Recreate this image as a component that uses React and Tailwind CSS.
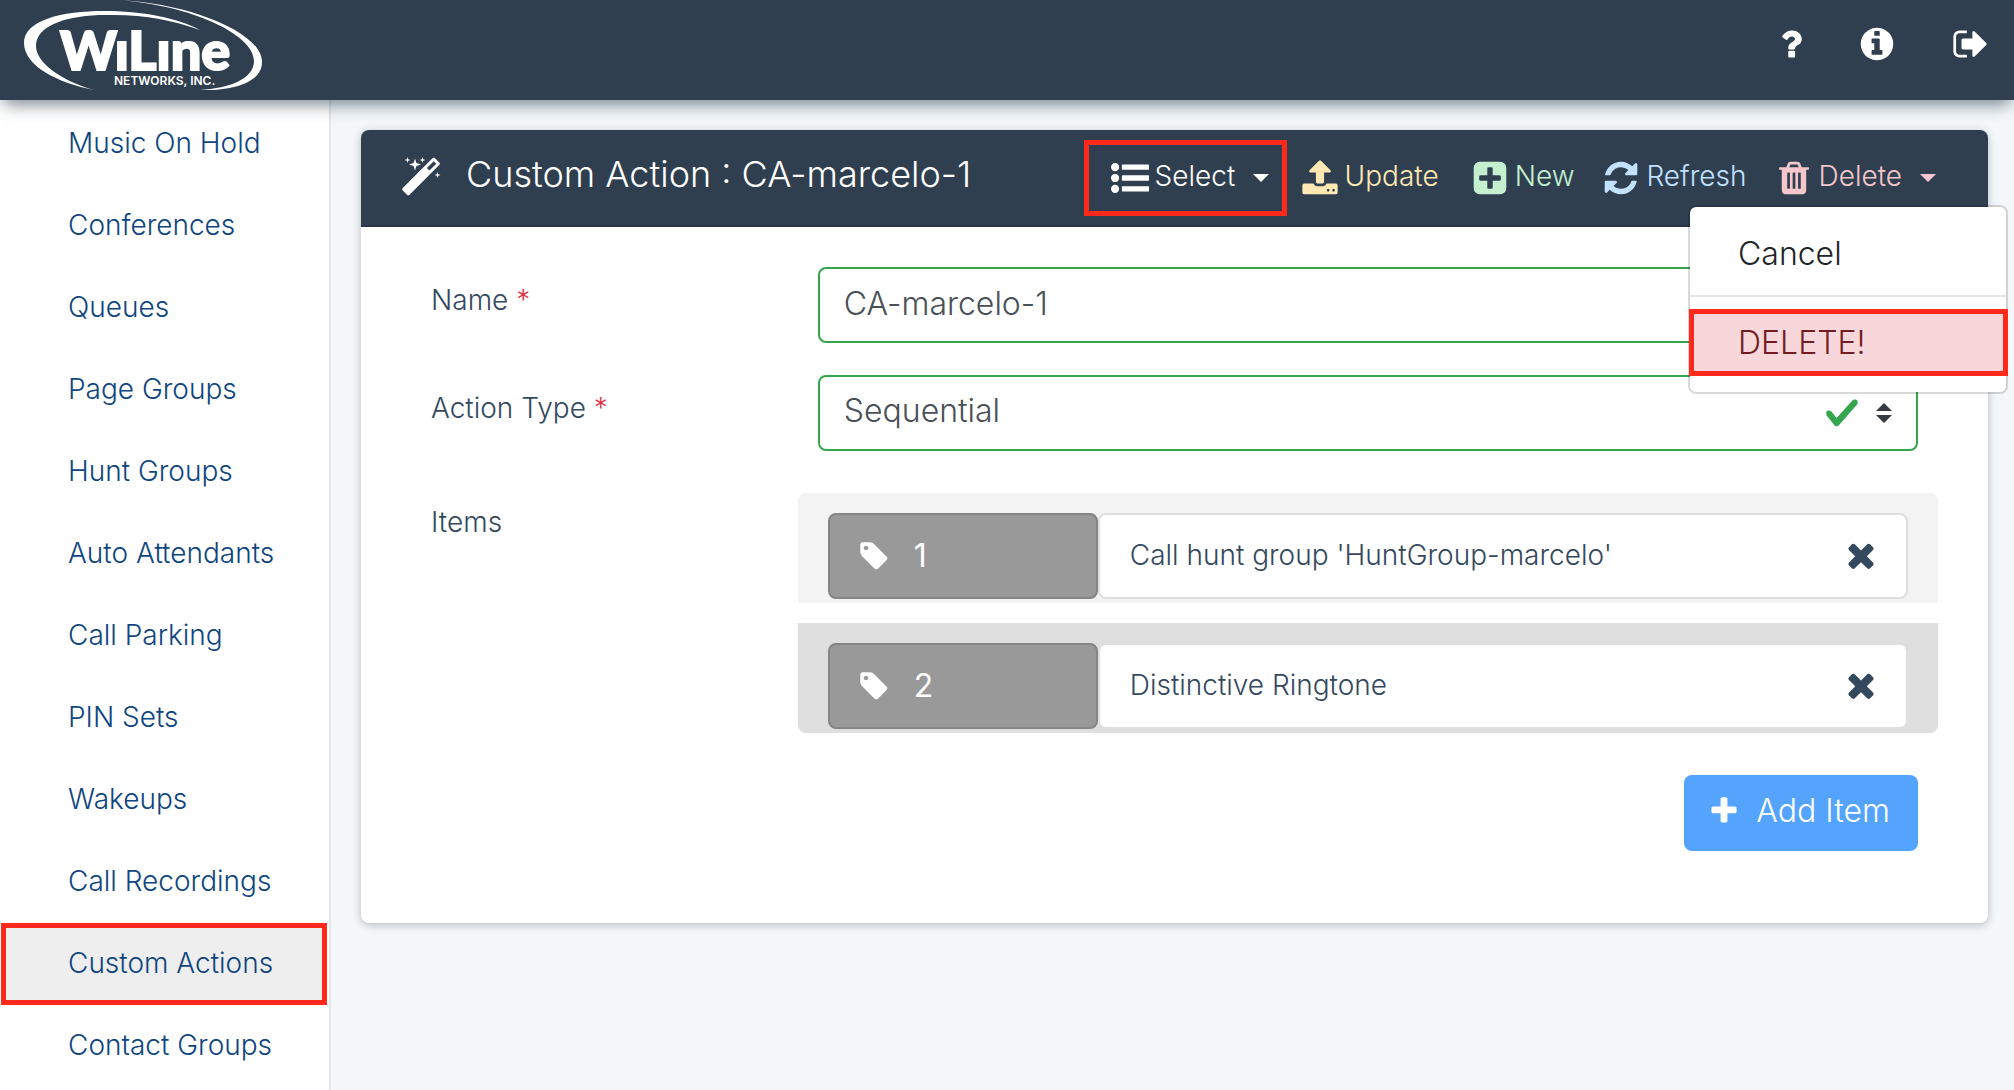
// src/App.jsx
import React, { useState } from 'react';

// Font Awesome 4 glyphs, all on a 1792 grid
const ICONS = {
  question: 'M1088 1256v240q0 16-12 28t-28 12h-240q-16 0-28-12t-12-28v-240q0-16 12-28t28-12h240q16 0 28 12t12 28zm316-600q0 54-15.5 101t-35 76.5-55 59.5-57.5 43.5-61 35.5q-41 23-68.5 65t-27.5 67q0 17-12 32.5t-28 15.5h-240q-15 0-25.5-18.5t-10.5-37.5v-45q0-83 65-156.5t143-108.5q59-27 84-56t25-76q0-42-46.5-74t-107.5-32q-65 0-108 29-35 25-107 115-13 16-31 16-12 0-25-8l-164-125q-13-10-15.5-25t5.5-28q160-266 464-266 80 0 161 31t146 83 106 127.5 41 158.5z',
  info: 'M1152 1376v-160q0-14-9-23t-23-9h-96v-512q0-14-9-23t-23-9h-320q-14 0-23 9t-9 23v160q0 14 9 23t23 9h96v320h-96q-14 0-23 9t-9 23v160q0 14 9 23t23 9h448q14 0 23-9t9-23zm-128-896v-160q0-14-9-23t-23-9h-192q-14 0-23 9t-9 23v160q0 14 9 23t23 9h192q14 0 23-9t9-23zm640 416q0 209-103 385.5t-279.5 279.5-385.5 103-385.5-103-279.5-279.5-103-385.5 103-385.5 279.5-279.5 385.5-103 385.5 103 279.5 279.5 103 385.5z',
  signOut: 'M704 1440q0 4 1 20t.5 26.5-3 23.5-10 19.5-20.5 6.5h-320q-119 0-203.5-84.5t-84.5-203.5v-704q0-119 84.5-203.5t203.5-84.5h320q13 0 22.5 9.5t9.5 22.5q0 4 1 20t.5 26.5-3 23.5-10 19.5-20.5 6.5h-320q-66 0-113 47t-47 113v704q0 66 47 113t113 47h312l11.5 1 11.5 3 8 5.5 7 9 2 13.5zm928-544q0 26-19 45l-544 544q-19 19-45 19t-45-19-19-45v-288h-448q-26 0-45-19t-19-45v-384q0-26 19-45t45-19h448v-288q0-26 19-45t45-19 45 19l544 544q19 19 19 45z',
  magic: 'M1254 581l293-293-107-107-293 293zm447-293q0 27-18 45l-1286 1286q-18 18-45 18t-45-18l-198-198q-18-18-18-45t18-45l1286-1286q18-18 45-18t45 18l198 198q18 18 18 45zm-1351-190l98 30-98 30-30 98-30-98-98-30 98-30 30-98zm350 162l196 60-196 60-60 196-60-196-196-60 196-60 60-196zm930 478l98 30-98 30-30 98-30-98-98-30 98-30 30-98zm-640-640l98 30-98 30-30 98-30-98-98-30 98-30 30-98z',
  list: 'M384 1408q0 80-56 136t-136 56-136-56-56-136 56-136 136-56 136 56 56 136zm0-512q0 80-56 136t-136 56-136-56-56-136 56-136 136-56 136 56 56 136zm1408 416v192q0 13-9.5 22.5t-22.5 9.5h-1216q-13 0-22.5-9.5t-9.5-22.5v-192q0-13 9.5-22.5t22.5-9.5h1216q13 0 22.5 9.5t9.5 22.5zm-1408-928q0 80-56 136t-136 56-136-56-56-136 56-136 136-56 136 56 56 136zm1408 416v192q0 13-9.5 22.5t-22.5 9.5h-1216q-13 0-22.5-9.5t-9.5-22.5v-192q0-13 9.5-22.5t22.5-9.5h1216q13 0 22.5 9.5t9.5 22.5zm0-512v192q0 13-9.5 22.5t-22.5 9.5h-1216q-13 0-22.5-9.5t-9.5-22.5v-192q0-13 9.5-22.5t22.5-9.5h1216q13 0 22.5 9.5t9.5 22.5z',
  upload: 'M1344 1472q0-26-19-45t-45-19-45 19-19 45 19 45 45 19 45-19 19-45zm256 0q0-26-19-45t-45-19-45 19-19 45 19 45 45 19 45-19 19-45zm128-224v320q0 40-28 68t-68 28h-1472q-40 0-68-28t-28-68v-320q0-40 28-68t68-28h427q21 56 70.5 92t110.5 36h256q61 0 110.5-36t70.5-92h427q40 0 68 28t28 68zm-325-648q-17 40-59 40h-256v448q0 26-19 45t-45 19h-256q-26 0-45-19t-19-45v-448h-256q-42 0-59-40-17-39 14-69l448-448q18-19 45-19t45 19l448 448q31 30 14 69z',
  plusSquare: 'M1408 960v-128q0-26-19-45t-45-19h-320v-320q0-26-19-45t-45-19h-128q-26 0-45 19t-19 45v320h-320q-26 0-45 19t-19 45v128q0 26 19 45t45 19h320v320q0 26 19 45t45 19h128q26 0 45-19t19-45v-320h320q26 0 45-19t19-45zm256-544v960q0 119-84.5 203.5t-203.5 84.5h-960q-119 0-203.5-84.5t-84.5-203.5v-960q0-119 84.5-203.5t203.5-84.5h960q119 0 203.5 84.5t84.5 203.5z',
  refresh: 'M1639 1056q0 5-1 7-64 268-268 434.5t-478 166.5q-146 0-282.5-55t-243.5-157l-129 129q-19 19-45 19t-45-19-19-45v-448q0-26 19-45t45-19h448q26 0 45 19t19 45-19 45l-137 137q71 66 161 102t187 36q134 0 250-65t186-179q11-17 53-117 8-23 30-23h192q13 0 22.5 9.5t9.5 22.5zm25-800v448q0 26-19 45t-45 19h-448q-26 0-45-19t-19-45 19-45l138-138q-148-137-349-137-134 0-250 65t-186 179q-11 17-53 117-8 23-30 23h-199q-13 0-22.5-9.5t-9.5-22.5v-7q65-268 270-434.5t480-166.5q146 0 284 55.5t245 156.5l130-129q19-19 45-19t45 19 19 45z',
  trash: 'M704 1376v-704q0-14-9-23t-23-9h-64q-14 0-23 9t-9 23v704q0 14 9 23t23 9h64q14 0 23-9t9-23zm256 0v-704q0-14-9-23t-23-9h-64q-14 0-23 9t-9 23v704q0 14 9 23t23 9h64q14 0 23-9t9-23zm256 0v-704q0-14-9-23t-23-9h-64q-14 0-23 9t-9 23v704q0 14 9 23t23 9h64q14 0 23-9t9-23zm-544-992h448l-48-117q-7-9-17-11h-317q-10 2-17 11zm928 32v64q0 14-9 23t-23 9h-96v948q0 83-47 143.5t-113 60.5h-832q-66 0-113-58.5t-47-141.5v-952h-96q-14 0-23-9t-9-23v-64q0-14 9-23t23-9h309l70-167q15-37 54-63t79-26h320q40 0 79 26t54 63l70 167h309q14 0 23 9t9 23z',
  tag: 'M576 448q0-53-37.5-90.5t-90.5-37.5-90.5 37.5-37.5 90.5 37.5 90.5 90.5 37.5 90.5-37.5 37.5-90.5zm1067 576q0 53-37 90l-491 492q-39 37-91 37-53 0-90-37l-715-716q-38-37-64.5-101t-26.5-117v-416q0-52 38-90t90-38h416q53 0 117 26.5t102 64.5l715 714q37 39 37 91z',
  times: 'M1490 1322q0 40-28 68l-136 136q-28 28-68 28t-68-28l-294-294-294 294q-28 28-68 28t-68-28l-136-136q-28-28-28-68t28-68l294-294-294-294q-28-28-28-68t28-68l136-136q28-28 68-28t68 28l294 294 294-294q28-28 68-28t68 28l136 136q28 28 28 68t-28 68l-294 294 294 294q28 28 28 68z',
  plus: 'M1600 736v192q0 40-28 68t-68 28h-416v416q0 40-28 68t-68 28h-192q-40 0-68-28t-28-68v-416h-416q-40 0-68-28t-28-68v-192q0-40 28-68t68-28h416v-416q0-40 28-68t68-28h192q40 0 68 28t28 68v416h416q40 0 68 28t28 68z',
};

const Icon = ({ name, className = 'size-[38px]' }) => (
  <svg viewBox="0 0 1792 1792" fill="currentColor" aria-hidden="true" className={`shrink-0 ${className}`}>
    <path d={ICONS[name]} />
  </svg>
);

const Caret = () => (
  <svg viewBox="0 0 16 8" fill="currentColor" aria-hidden="true" className="ml-[18px] w-4 h-2 shrink-0">
    <path d="M0 0h16L8 8z" />
  </svg>
);

const NAV_ITEMS = [
  'Music On Hold',
  'Conferences',
  'Queues',
  'Page Groups',
  'Hunt Groups',
  'Auto Attendants',
  'Call Parking',
  'PIN Sets',
  'Wakeups',
  'Call Recordings',
  'Custom Actions',
  'Contact Groups',
];

const Logo = () => (
  <svg viewBox="0 0 270 96" role="img" aria-label="WiLine Networks, Inc." className="w-[270px] h-24" fill="#fff">
    <path d="M94 90C58 83 24 66 24 43C24 20 62 11 104 11C142 11 178 18 200 30C172 20 142 14 106 15C68 15 36 25 36 46C36 63 62 81 94 90Z" />
    <path d="M118 0C188 3 262 32 262 62C262 83 232 91 200 90C230 88 254 79 254 61C254 34 190 5 118 0Z" />
    <text x="60" y="70" fontFamily="Lato, sans-serif" fontWeight="900" fontSize="54" stroke="#fff" strokeWidth="2">WıLıne</text>
    <text x="114" y="85" fontFamily="Inter, sans-serif" fontWeight="600" fontSize="12">NETWORKS, INC.</text>
  </svg>
);

const TopBar = () => (
  <header className="relative z-10 flex h-[100px] items-start justify-between bg-[#303f50] pr-6 shadow-[0_8px_16px_-4px_#303f50aa]">
    <a href="#home"><Logo /></a>
    <div className="flex gap-12 pt-[25px] text-white">
      <button type="button" aria-label="Help"><Icon name="question" /></button>
      <button type="button" aria-label="About"><Icon name="info" /></button>
      <button type="button" aria-label="Sign out" className="ml-2"><Icon name="signOut" /></button>
    </div>
  </header>
);

const Sidebar = ({ active }) => (
  <nav className="w-[331px] shrink-0 border-r-2 border-[#e4e7ea] bg-white pt-[3px]">
    {NAV_ITEMS.map((item) => (
      <a
        key={item}
        href="#nav"
        className={`flex h-[82px] items-center pb-0.5 text-[28px] text-[#0f4680] ${
          item === active ? 'ml-px mr-0.5 bg-[#eee] pl-[62px] border-5 border-[#ff2a1c]' : 'pl-[68px]'
        }`}
      >
        {item}
      </a>
    ))}
  </nav>
);

const ToolButton = ({ icon, label, caret, className }) => (
  <button type="button" className={`flex items-center whitespace-nowrap ${className}`}>
    <Icon name={icon} />
    <span className="ml-1.5 pb-1">{label}</span>
    {caret && <Caret />}
  </button>
);

const DeleteMenu = () => (
  <div className="absolute -right-[72px] top-[50px] z-20 w-80 rounded-lg border-2 border-black/15 bg-white bg-clip-padding py-4 text-[32px] text-[#212529]">
    <button type="button" className="flex h-[62px] w-full items-center pl-12">Cancel</button>
    <div className="mt-2.5 mb-3 h-0.5 bg-[#e4e5e7]" />
    <div className="-ml-px -mr-0.5">
      <button type="button" className="flex h-[67px] w-full items-center border-5 border-[#ff2a1c] bg-[#f8d7da] pt-0.5 pl-11 text-[#721c24]">
        DELETE!
      </button>
    </div>
  </div>
);

const CardHeader = ({ title }) => (
  <div className="flex h-[97px] items-center justify-between rounded-t-lg border-b-2 border-[#283748] bg-[#303f50] pl-[39px] pr-[52px] text-white">
    <h1 className="flex items-center text-[36px]">
      <Icon name="magic" className="mr-6 size-[42px]" />
      <span className="pb-2">{title}</span>
    </h1>
    <div className="flex items-center text-[28px]">
      <ToolButton icon="list" label="Select" caret className="mr-3.5 h-[76px] w-[203px] border-5 border-[#ff2a1c] pl-[22px]" />
      <ToolButton icon="upload" label="Update" className="mr-8 text-[#ffe8b3]" />
      <ToolButton icon="plusSquare" label="New" className="mr-7 text-[#c5f0d0]" />
      <ToolButton icon="refresh" label="Refresh" className="mr-7 text-[#c2e0ff]" />
      <div className="relative">
        <ToolButton icon="trash" label="Delete" caret className="text-[#f5c6cb]" />
        <DeleteMenu />
      </div>
    </div>
  </div>
);

const Required = () => <span className="text-[#dc3545]">*</span>;

const ItemRow = ({ index, text, className }) => (
  <li className={`flex px-[30px] pt-5 pb-1 ${className}`}>
    <div className="flex h-[86px] w-[270px] shrink-0 items-center rounded-lg border-2 border-[#858585] bg-[#999] pl-7 text-[32px] font-normal text-white">
      <Icon name="tag" className="mr-6 size-8" />
      {index}
    </div>
    <div className="flex h-[86px] flex-1 items-center justify-between rounded-lg border-2 border-[#dfdfdf] bg-white pl-[30px] pr-[26px] pb-0.5 text-[28px]">
      {text}
      <button type="button" aria-label={`Remove item ${index}`}><Icon name="times" /></button>
    </div>
  </li>
);

const fieldClass = 'h-[76px] w-full appearance-none rounded-lg border-2 border-[#34a54e] bg-white px-6 pb-1 text-[32px] text-[#495057] outline-none';

export default function App() {
  const [name, setName] = useState('CA-marcelo-1');
  const [type, setType] = useState('Sequential');

  return (
    <div className="flex min-h-screen flex-col bg-[#f4f8fb] font-['Inter',sans-serif] font-light text-[#34495e]">
      <TopBar />
      <div className="flex flex-1">
        <Sidebar active="Custom Actions" />
        <main className="min-w-0 flex-1 pt-[30px] pl-[30px] pr-[26px]">
          <section className="rounded-lg bg-white shadow-[0_2px_10px_rgba(0,0,0,0.25)]">
            <CardHeader title="Custom Action : CA-marcelo-1" />
            <form className="grid grid-cols-4 px-10 pt-10 pb-[72px] text-[28px]">
              <label htmlFor="name" className="px-[30px] pt-3">Name <Required /></label>
              <div className="col-span-3 mb-8 px-[30px]">
                <input id="name" value={name} onChange={(e) => setName(e.target.value)} className={fieldClass} />
              </div>

              <label htmlFor="type" className="px-[30px] pt-3">Action Type <Required /></label>
              <div className="col-span-3 mb-[42px] px-[30px]">
                <div className="relative">
                  <select id="type" value={type} onChange={(e) => setType(e.target.value)} className={fieldClass}>
                    <option>Sequential</option>
                    <option>Random</option>
                  </select>
                  <div className="pointer-events-none absolute inset-y-0 right-[26px] flex items-center gap-4">
                    <svg viewBox="0 0 8 8" aria-hidden="true" className="size-9" fill="#34a54e">
                      <path d="M2.3 6.73L.6 4.53c-.4-1.04.46-1.4 1.1-.8l1.1 1.4 3.4-3.8c.6-.63 1.6-.27 1.2.7l-4 4.6c-.43.5-.8.4-1.1.1z" />
                    </svg>
                    <svg viewBox="0 0 4 5" aria-hidden="true" className="h-5 w-4" fill="#343a40">
                      <path d="M2 0L0 2h4zm0 5L0 3h4z" />
                    </svg>
                  </div>
                </div>
              </div>

              <div className="px-[30px] pt-2">Items</div>
              <div className="col-span-3 px-2.5">
                <ul>
                  <ItemRow index={1} text="Call hunt group 'HuntGroup-marcelo'" className="mb-5 rounded-t-lg bg-[#f3f3f3]" />
                  <ItemRow index={2} text="Distinctive Ringtone" className="rounded-b-lg bg-[#dfdfdf]" />
                </ul>
                <div className="mt-[42px] flex justify-end pr-5">
                  <button type="button" className="flex h-[76px] items-center rounded-lg bg-[#54a4fd] pl-6 pr-7 pb-1 text-[32px] text-white">
                    <Icon name="plus" className="mr-4 size-8" />
                    Add Item
                  </button>
                </div>
              </div>
            </form>
          </section>
        </main>
      </div>
    </div>
  );
}
